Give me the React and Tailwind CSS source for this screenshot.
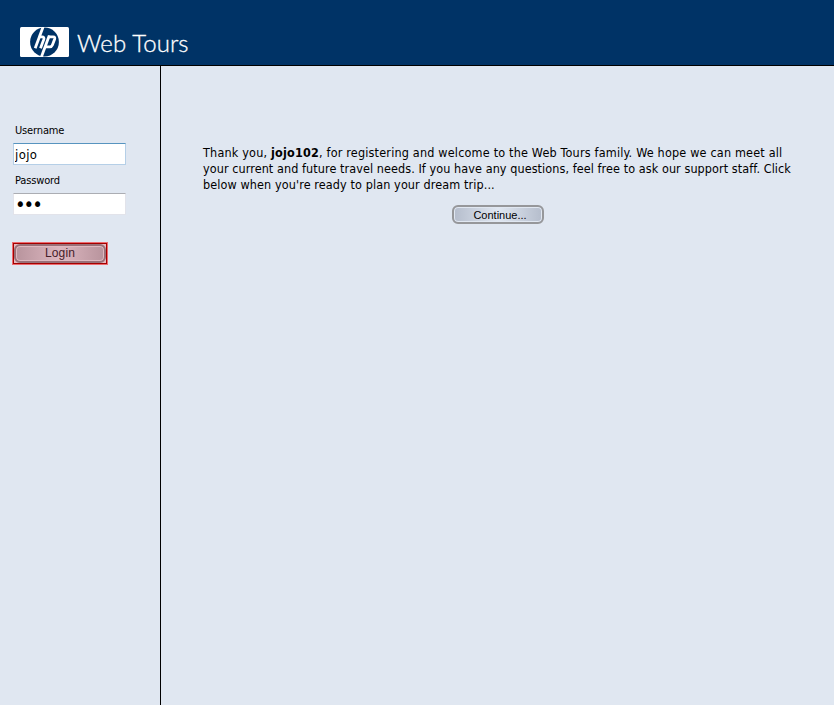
function Logo() {
  return (
    <svg className="block h-[30px] w-[49px]" viewBox="0 0 49 30" aria-label="HP">
      <rect width="49" height="30" rx="1.5" fill="#fff" />
      <circle cx="24.5" cy="15" r="14.4" fill="#003366" />
      <g fill="none" stroke="#fff" strokeWidth="2.8">
        <path d="M23.4 -1 L15.2 21.3" />
        <path d="M19 9.9 H22 Q24.6 9.9 23.8 12.4 L20.5 21.3" />
        <path d="M29.3 8.5 L21 31" />
        <path d="M28.6 9.9 H33.2 Q35.4 9.9 34.6 12.2 L32.4 18 Q31.7 19.8 29.8 19.8 H25.4" />
      </g>
    </svg>
  );
}

function Field({ label, type, value, className }) {
  return (
    <label className="block">
      <span className="block h-[17px] pl-[2px] text-[11px] leading-[15px] tracking-[-0.15px]">{label}</span>
      <input
        type={type}
        defaultValue={value}
        className={`mt-[3px] block h-[22px] w-[113px] border bg-white outline-none ${className}`}
      />
    </label>
  );
}

export default function App() {
  return (
    <div className="flex h-[705px] w-[834px] flex-col overflow-hidden bg-[#e0e7f1] font-['DejaVu_Sans_Condensed','DejaVu_Sans',sans-serif] text-black [font-stretch:condensed]">
      <header className="flex h-[66px] shrink-0 items-start border-b border-black bg-[#003366] pt-[27px] pl-[20px]">
        <Logo />
        <h1 className="ml-[8px] font-['Lato',sans-serif] text-[24px] leading-[32px] font-light tracking-[0.1px] whitespace-nowrap text-white [-webkit-text-stroke:0.3px_white] [font-stretch:normal]">
          Web Tours
        </h1>
      </header>
      <div className="flex min-h-0 flex-1">
        <aside className="w-[161px] shrink-0 border-r border-black pt-[57px] pl-[13px]">
          <Field
            label="Username"
            type="text"
            value="jojo"
            className="border-[#b5cfe7] border-t-[#5794bf] pl-px text-[13px] tracking-[0.4px]"
          />
          <div className="h-[8px]" />
          <Field
            label="Password"
            type="password"
            value="abc"
            className="border-[#e2e3ea] border-t-[#abadb3] pl-px text-[20px] tracking-[-2px]"
          />
          <div className="mt-[27px] -ml-px h-[23px] w-[96px] border border-[#ed6b70] bg-[#e5b9c0]">
            <div className="h-[21px] w-[94px] border border-[#a40000]">
              <button className="block h-[19px] w-[92px] rounded-[6px] border-2 border-[#997078] bg-linear-to-r from-[#b8949d] via-[#dcb6bf] to-[#b8949d] font-['Liberation_Sans',Arial,sans-serif] text-[12px] leading-[15px] tracking-[0.15px] text-[#45202a] shadow-[inset_0_0_0_1px_#dfb9c0]">
                Login
              </button>
            </div>
          </div>
        </aside>
        <main className="flex-1 pt-[79px] pl-[42px]">
          <p className="text-[12.5px] leading-[16px] whitespace-nowrap">
            <span className="block tracking-[0.19px]">
              Thank you, <b>jojo102</b>, for registering and welcome to the Web Tours family. We hope we can meet all
            </span>
            <span className="block tracking-[0.08px]">
              your current and future travel needs. If you have any questions, feel free to ask our support staff. Click
            </span>
            <span className="block tracking-[0.11px]">below when you're ready to plan your dream trip...</span>
          </p>
          <button className="mt-[12px] ml-[249px] block h-[19px] w-[92px] rounded-[6px] border-2 border-[#96979a] bg-linear-to-r from-[#b5bdcc] via-[#e0e7f1] to-[#b5bdcc] pl-[4px] font-['Liberation_Sans',Arial,sans-serif] text-[11px] leading-[14px] text-black shadow-[inset_0_0_0_1px_#e0e7f1]">
            Continue...
          </button>
        </main>
      </div>
    </div>
  );
}
